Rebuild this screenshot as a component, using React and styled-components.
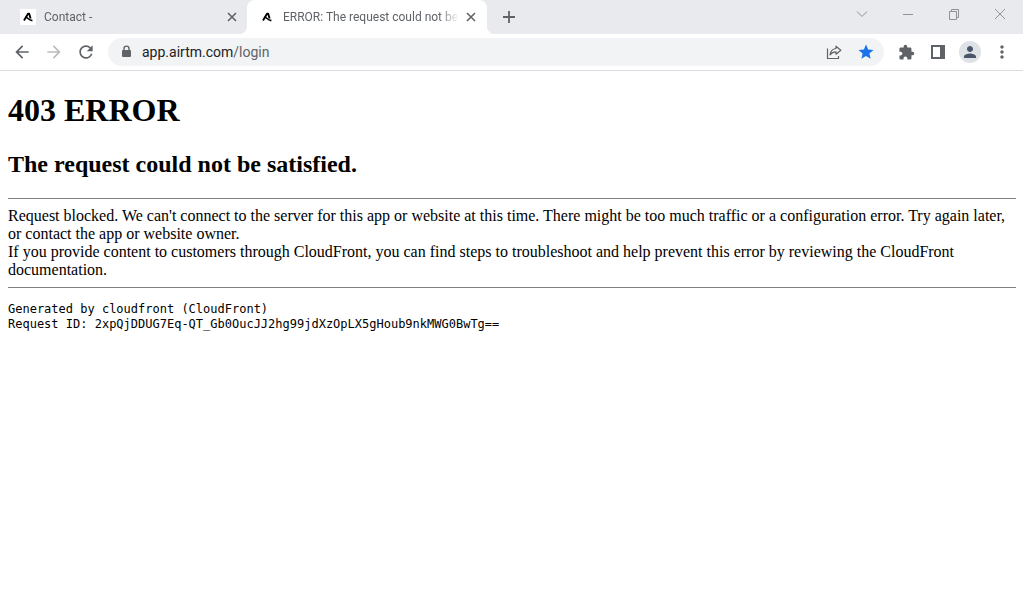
import React from "react";
import styled, { createGlobalStyle } from "styled-components";
import {
  MdArrowBack,
  MdArrowForward,
  MdExtension,
  MdMoreVert,
  MdPerson,
  MdRefresh,
  MdStar,
} from "react-icons/md";

const GlobalStyle = createGlobalStyle`
  * {
    box-sizing: border-box;
  }

  body {
    margin: 0;
    background: #ffffff;
  }
`;

const Browser = styled.div`
  font-family: Roboto, "Open Sans", sans-serif;
  color: #5f6368;
`;

const TabStrip = styled.header`
  height: 34px;
  background: #e8eaed;
  display: flex;
  align-items: stretch;
  padding-left: 8px;
`;

const Tab = styled.div`
  position: relative;
  width: 240px;
  margin-right: -1px;
  display: flex;
  align-items: center;
  padding: 0 8px 0 12px;
  border-radius: 8px 8px 0 0;
  background: ${(props) => (props.$active ? "#ffffff" : "transparent")};

  &::before,
  &::after {
    content: "";
    display: ${(props) => (props.$active ? "block" : "none")};
    position: absolute;
    bottom: 0;
    width: 8px;
    height: 8px;
  }

  &::before {
    left: -8px;
    background: radial-gradient(circle at 0 0, transparent 8px, #ffffff 8px);
  }

  &::after {
    right: -8px;
    background: radial-gradient(circle at 100% 0, transparent 8px, #ffffff 8px);
  }
`;

const Favicon = styled.span`
  width: 16px;
  height: 16px;
  background: #ffffff;
  display: flex;
  align-items: center;
  justify-content: center;
`;

const TabTitle = styled.a`
  flex: 1;
  min-width: 0;
  margin: 0 4px 0 8px;
  overflow: hidden;
  white-space: nowrap;
  font-size: 12px;
  line-height: 16px;
  color: #5f6368;
  text-decoration: none;
  mask-image: linear-gradient(to left, transparent, #000000 20px);
`;

const IconButton = styled.button`
  flex: none;
  width: ${(props) => props.$size}px;
  height: ${(props) => props.$size}px;
  padding: 0;
  border: none;
  border-radius: 50%;
  background: ${(props) => props.$background || "transparent"};
  color: ${(props) => props.$color || "#5f6368"};
  display: flex;
  align-items: center;
  justify-content: center;
`;

const NewTab = styled(IconButton)`
  margin: 3px 0 0 9px;
`;

const WindowControls = styled.div`
  margin-left: auto;
  display: flex;
`;

const WindowButton = styled.button`
  width: 46px;
  height: 28px;
  padding: 0;
  border: none;
  background: transparent;
  color: #8f9296;
  display: flex;
  align-items: center;
  justify-content: center;
`;

const Toolbar = styled.nav`
  height: 37px;
  border-bottom: 1px solid #dadce0;
  background: #ffffff;
  display: flex;
  align-items: center;
  padding: 0 5px 0 6px;
`;

const ToolbarGroup = styled.div`
  display: flex;
  align-items: center;
`;

const AddressBar = styled.div`
  flex: 1;
  min-width: 0;
  height: 28px;
  margin: 0 6px;
  padding: 0 2px 0 10px;
  border-radius: 14px;
  background: #f1f3f4;
  display: flex;
  align-items: center;
`;

const Address = styled.a`
  flex: 1;
  min-width: 0;
  margin-left: 8px;
  overflow: hidden;
  white-space: nowrap;
  font-size: 14px;
  line-height: 20px;
  color: #5f6368;
  text-decoration: none;
`;

const Host = styled.span`
  color: #202124;
`;

const Page = styled.main`
  padding: 21px 7px 0 8px;
  color: #000000;
  font-family: "Liberation Serif", "Times New Roman", serif;
  font-size: 16px;
  line-height: 18px;
`;

const Title = styled.h1`
  margin: 0 0 21px;
  font-size: 32px;
  line-height: 37px;
`;

const Subtitle = styled.h2`
  margin: 0 0 20px;
  font-size: 24px;
  line-height: 28px;
`;

const Rule = styled.hr`
  height: 1px;
  margin: 8px 0;
  border: none;
  background: #808080;
`;

const Message = styled.p`
  margin: 0;
`;

const Details = styled.pre`
  margin: 14px 0;
  font-family: "DejaVu Sans Mono", "Liberation Mono", monospace;
  font-size: 12px;
  line-height: 15px;
`;

const AirtmLogo = () => (
  <Favicon>
    <svg width="10" height="10" viewBox="0 0 10 10" fill="none" stroke="#000000">
      <path d="M1 8.4 5 1.8H6.2L7.6 6.6" strokeWidth="1.9" strokeLinejoin="round" />
      <path d="M2.6 5.4C4.2 4.6 5 8 9.4 8.6" strokeWidth="1.6" />
    </svg>
  </Favicon>
);

const CloseIcon = () => (
  <svg width="10" height="10" viewBox="0 0 10 10" fill="none" stroke="currentColor" strokeWidth="1.6">
    <path d="M1 1 9 9M9 1 1 9" />
  </svg>
);

const PlusIcon = () => (
  <svg width="12" height="12" viewBox="0 0 12 12" fill="none" stroke="currentColor" strokeWidth="1.8">
    <path d="M6 0v12M0 6h12" />
  </svg>
);

const LockIcon = () => (
  <svg width="16" height="16" viewBox="0 0 16 16" fill="none">
    <rect x="4" y="6" width="9" height="7" rx="1" fill="#5f6368" />
    <path d="M6 6.5V4.6a2.5 2.5 0 0 1 5 0v1.9" stroke="#5f6368" strokeWidth="1.4" />
  </svg>
);

const ShareIcon = () => (
  <svg width="16" height="16" viewBox="0 0 16 16" fill="none" stroke="#5f6368" strokeWidth="1.2">
    <path d="M1.5 4.5v10h11V12" />
    <path d="M10 2.2 14.8 6.2 10 10.2V7.9C7.4 7.9 5.4 8.9 4 10.8 4.5 7.5 6.4 5 10 4.5Z" strokeLinejoin="round" />
  </svg>
);

const SidePanelIcon = () => (
  <svg width="14" height="14" viewBox="0 0 14 14">
    <path d="M0 0h14v14H0ZM2 2v10h7V2Z" fill="#5f6368" fillRule="evenodd" />
  </svg>
);

const windowIcons = [
  { label: "Search tabs", path: "M1 3.5 6 8.5 11 3.5" },
  { label: "Minimize", path: "M1 6.5h10" },
  { label: "Restore", path: "M1.5 3.5h7v8h-7ZM3.5 3.5v-2h7v8h-2" },
  { label: "Close", path: "M1 1 11 11M11 1 1 11" },
];

const BrowserTab = ({ title, active }) => (
  <Tab $active={active}>
    <AirtmLogo />
    <TabTitle href="#">{title}</TabTitle>
    <IconButton $size={16} aria-label="Close tab">
      <CloseIcon />
    </IconButton>
  </Tab>
);

const App = () => {
  return (
    <Browser>
      <GlobalStyle />
      <TabStrip>
        <BrowserTab title="Contact -" />
        <BrowserTab title="ERROR: The request could not be" active />
        <NewTab $size={28} aria-label="New tab">
          <PlusIcon />
        </NewTab>
        <WindowControls>
          {windowIcons.map((icon) => (
            <WindowButton key={icon.label} aria-label={icon.label}>
              <svg width="12" height="12" viewBox="0 0 12 12" fill="none" stroke="currentColor">
                <path d={icon.path} />
              </svg>
            </WindowButton>
          ))}
        </WindowControls>
      </TabStrip>

      <Toolbar>
        <ToolbarGroup>
          <IconButton $size={32} aria-label="Back">
            <MdArrowBack size={20} />
          </IconButton>
          <IconButton $size={32} $color="#babcbe" aria-label="Forward">
            <MdArrowForward size={20} />
          </IconButton>
          <IconButton $size={32} aria-label="Reload">
            <MdRefresh size={20} />
          </IconButton>
        </ToolbarGroup>
        <AddressBar>
          <LockIcon />
          <Address href="#">
            <Host>app.airtm.com</Host>/login
          </Address>
          <IconButton $size={32} aria-label="Share">
            <ShareIcon />
          </IconButton>
          <IconButton $size={32} $color="#1a73e8" aria-label="Bookmark">
            <MdStar size={18} />
          </IconButton>
        </AddressBar>
        <ToolbarGroup>
          <IconButton $size={32} aria-label="Extensions">
            <MdExtension size={17} />
          </IconButton>
          <IconButton $size={32} aria-label="Side panel">
            <SidePanelIcon />
          </IconButton>
          <IconButton $size={32} aria-label="Profile">
            <IconButton as="span" $size={22} $background="#dee1e6" $color="#4a5568">
              <MdPerson size={18} />
            </IconButton>
          </IconButton>
          <IconButton $size={32} aria-label="Menu">
            <MdMoreVert size={20} />
          </IconButton>
        </ToolbarGroup>
      </Toolbar>

      <Page>
        <Title>403 ERROR</Title>
        <Subtitle>The request could not be satisfied.</Subtitle>
        <Rule />
        <Message>
          Request blocked. We can't connect to the server for this app or website at this time. There might be too much
          traffic or a configuration error. Try again later, or contact the app or website owner.
          <br />
          If you provide content to customers through CloudFront, you can find steps to troubleshoot and help prevent
          this error by reviewing the CloudFront documentation.
        </Message>
        <Rule />
        <Details>
          {"Generated by cloudfront (CloudFront)\nRequest ID: 2xpQjDDUG7Eq-QT_Gb0OucJJ2hg99jdXzOpLX5gHoub9nkMWG0BwTg=="}
        </Details>
      </Page>
    </Browser>
  );
};

export default App;
